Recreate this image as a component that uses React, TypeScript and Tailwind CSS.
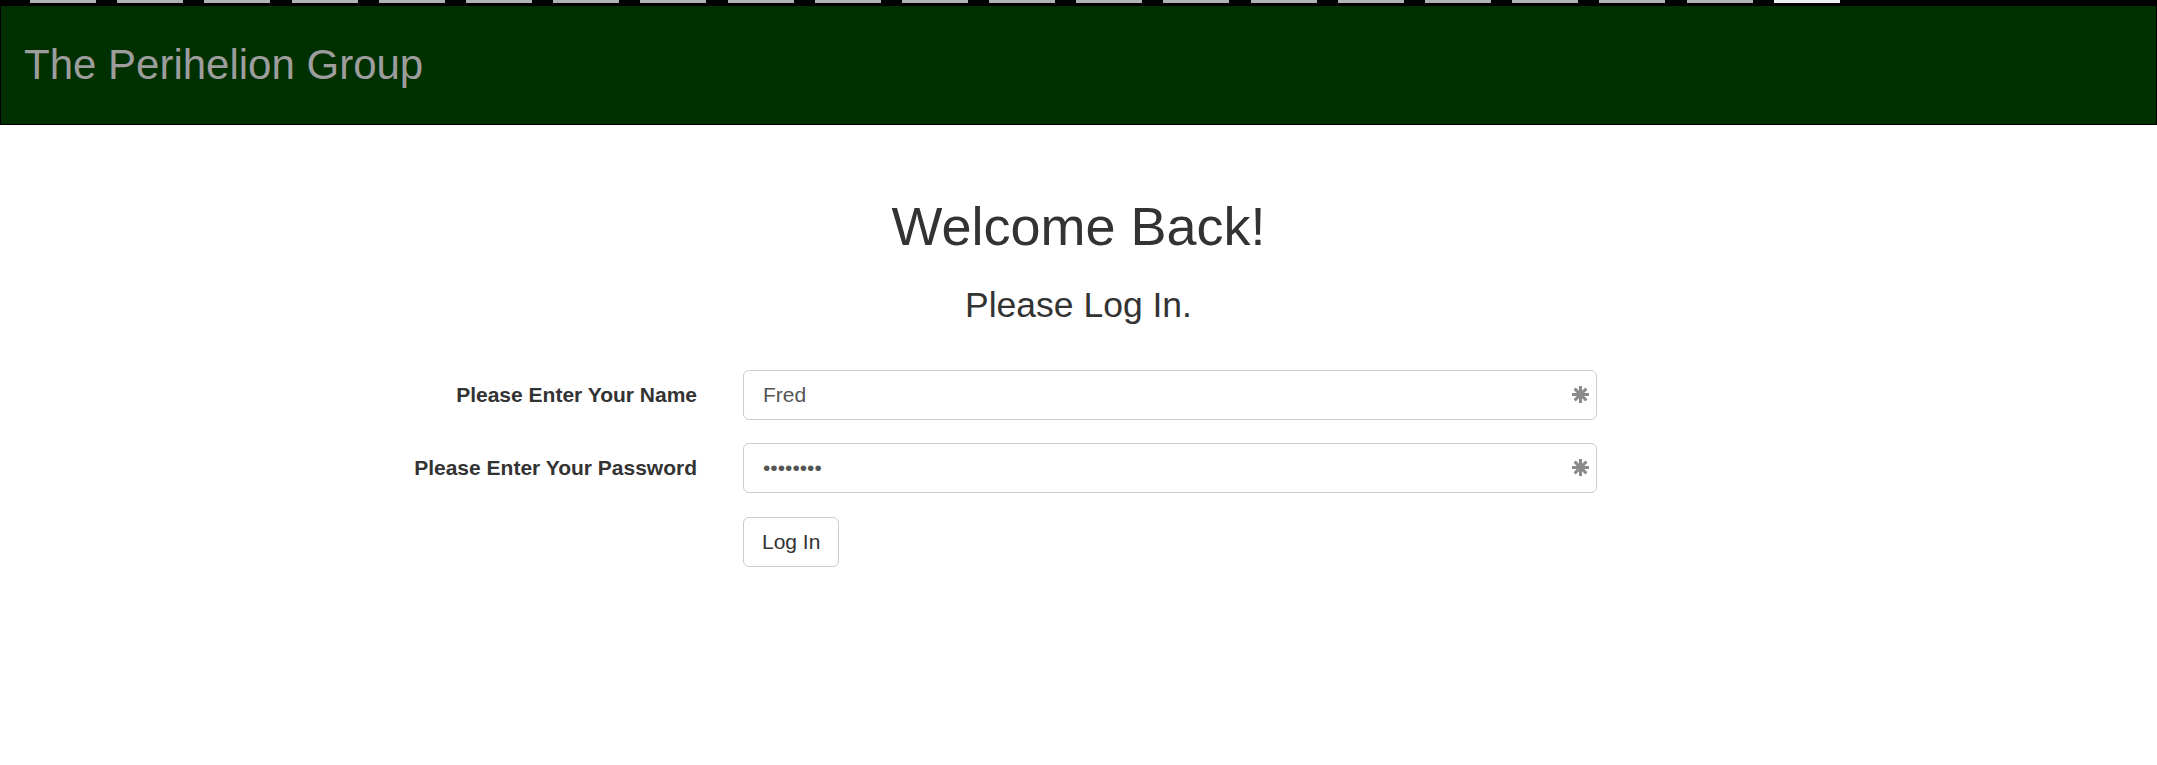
import React from "react"

const TAB_COUNT = 21

const Asterisk = () => (
  <svg
    width="17"
    height="17"
    viewBox="0 0 17 17"
    className="absolute right-[8px] top-[16px]"
  >
    <g stroke="#8a8a8a" strokeWidth="3">
      <line x1="8.5" y1="0" x2="8.5" y2="17" />
      <line x1="0" y1="8.5" x2="17" y2="8.5" />
      <line x1="2.6" y1="2.6" x2="14.4" y2="14.4" />
      <line x1="14.4" y1="2.6" x2="2.6" y2="14.4" />
    </g>
  </svg>
)

type FieldProps = {
  label: string
  type: string
  value: string
}

const Field = ({ label, type, value }: FieldProps) => (
  <div className="flex items-center h-[50px]">
    <label className="w-[719px] pr-[22px] text-right font-bold text-[21px] text-[#333]">
      {label}
    </label>
    <div className="relative ml-[24px] w-[854px] h-[50px]">
      <input
        type={type}
        defaultValue={value}
        readOnly
        className="w-full h-full border border-[#ccc] rounded-[6px] pl-[19px] pr-[40px] text-[21px] text-[#555] bg-white outline-none"
        style={{ fontFamily: '"Liberation Sans", Arial, sans-serif' }}
      />
      <Asterisk />
    </div>
  </div>
)

const App = () => {
  return (
    <div className="min-h-screen bg-white font-['Liberation_Sans',Arial,sans-serif]">
      {/* top tab strip */}
      <div className="h-[5px] bg-black flex items-start pl-[30px] gap-[21.2px]">
        {Array.from({ length: TAB_COUNT }).map((_, i) => (
          <div
            key={i}
            className={`h-[3px] w-[66px] ${
              i === TAB_COUNT - 1 ? "bg-[#eeeeee]" : "bg-[#b3b3b3]"
            }`}
          />
        ))}
      </div>

      <header className="h-[120px] bg-[#003000] border border-black flex items-center pl-[23px]">
        <span className="text-[42px] leading-none text-[#9d9d9d]">
          The Perihelion Group
        </span>
      </header>

      <div className="pt-[71px]">
        <h1 className="text-center text-[54px] leading-[60px] text-[#333]">
          Welcome Back!
        </h1>
        <h3 className="mt-[29px] text-center text-[35.5px] leading-[40px] text-[#333]">
          Please Log In.
        </h3>

        <form className="mt-[45px]">
          <Field label="Please Enter Your Name" type="text" value="Fred" />
          <div className="h-[23px]" />
          <Field
            label="Please Enter Your Password"
            type="password"
            value="password"
          />
          <div className="h-[24px]" />
          <div className="pl-[743px]">
            <button
              type="button"
              className="h-[50px] px-[18px] border border-[#ccc] rounded-[6px] bg-white text-[21px] text-[#333]"
            >
              Log In
            </button>
          </div>
        </form>
      </div>
    </div>
  )
}

export default App
